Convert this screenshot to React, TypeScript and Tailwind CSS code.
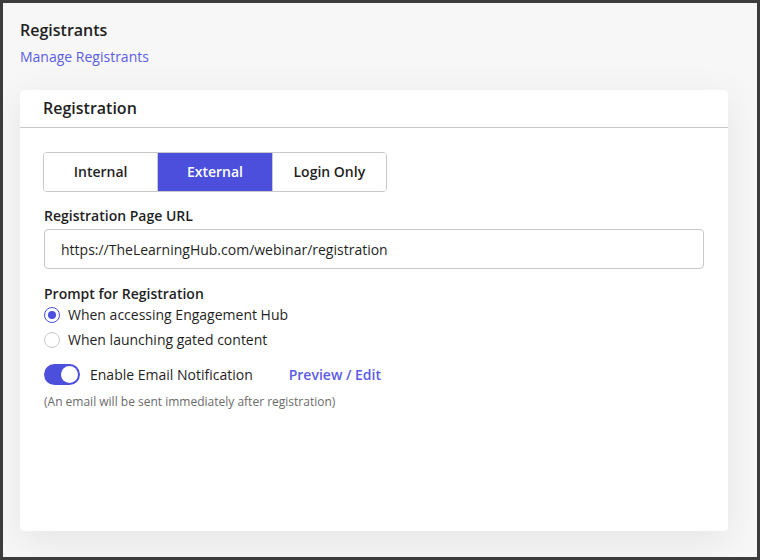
import React, { useState } from 'react';

const modes = ['Internal', 'External', 'Login Only'];

export default function App() {
  const [mode, setMode] = useState('External');
  const [prompt, setPrompt] = useState('hub');
  const [notify, setNotify] = useState(true);

  return (
    <div
      className="w-[760px] h-[560px] border-[3px] border-[#3c3c3c] bg-[#f7f7f7] text-[#1f1f1f] overflow-hidden"
      style={{ fontFamily: '"Open Sans", "Noto Sans", sans-serif' }}
    >
      <div className="px-[17px] pt-[16px]">
        <h1 className="text-[16px] font-semibold leading-[22px]">Registrants</h1>
        <a className="block mt-[6px] text-[14px] leading-[20px] text-[#5b5be6] cursor-pointer">Manage Registrants</a>

        {/* Registration card */}
        <div className="mt-[23px] w-[708px] h-[441px] bg-white rounded-[4px] shadow-[0_10px_40px_rgba(0,0,0,0.08)]">
          <div className="h-[38px] px-[23px] pb-[1px] flex items-center border-b border-[#c8c8c8]">
            <h2 className="text-[16px] font-semibold">Registration</h2>
          </div>

          <div className="px-[23px] pt-[24px]">
            <div className="flex w-[344px] h-[40px] border border-[#c8c8c8] rounded-[4px] overflow-hidden">
              {modes.map((m) => (
                <button
                  key={m}
                  onClick={() => setMode(m)}
                  className={`flex-1 pb-[1px] text-[14px] font-semibold border-r border-[#c8c8c8] last:border-r-0 ${
                    mode === m ? 'bg-[#4b4fdc] text-white border-[#4b4fdc]' : 'bg-white text-[#1f1f1f]'
                  }`}
                >
                  {m}
                </button>
              ))}
            </div>

            <label className="block mt-[14px] ml-[1px] text-[14px] font-semibold leading-[20px]">Registration Page URL</label>
            <div className="mt-[3px] ml-[1px] w-[660px] h-[40px] border border-[#c8c8c8] rounded-[4px] flex items-center px-[16px] text-[14px]">
              https://TheLearningHub.com/webinar/registration
            </div>

            <div className="mt-[15px] ml-[1px] text-[14px] font-semibold leading-[20px]">Prompt for Registration</div>
            <div className="-mt-[2px] ml-[1px] flex flex-col">
              {[
                { id: 'hub', label: 'When accessing Engagement Hub' },
                { id: 'gated', label: 'When launching gated content' },
              ].map((o) => (
                <div key={o.id} className="flex items-center h-[25px] gap-[8px] cursor-pointer" onClick={() => setPrompt(o.id)}>
                  <span
                    className={`w-[16px] h-[16px] rounded-full border flex items-center justify-center ${
                      prompt === o.id ? 'border-[#4b4fdc]' : 'border-[#c8c8c8]'
                    }`}
                  >
                    {prompt === o.id && <span className="w-[8px] h-[8px] rounded-full bg-[#4b4fdc]" />}
                  </span>
                  <span className="text-[14px]">{o.label}</span>
                </div>
              ))}
            </div>

            <div className="mt-[12px] ml-[1px] flex items-center h-[21px]">
              <button
                onClick={() => setNotify(!notify)}
                className={`w-[36px] h-[21px] rounded-full flex items-center p-[2px] ${
                  notify ? 'bg-[#4b4fdc] justify-end' : 'bg-[#c8c8c8] justify-start'
                }`}
              >
                <span className="w-[17px] h-[17px] rounded-full bg-white" />
              </button>
              <span className="ml-[10px] text-[14px]">Enable Email Notification</span>
              <a className="ml-[36px] text-[14px] font-semibold text-[#5b5be6] cursor-pointer">Preview / Edit</a>
            </div>
            <div className="mt-[8px] ml-[1px] text-[12px] text-[#6b6b6b]">(An email will be sent immediately after registration)</div>
          </div>
        </div>
      </div>
    </div>
  );
}
